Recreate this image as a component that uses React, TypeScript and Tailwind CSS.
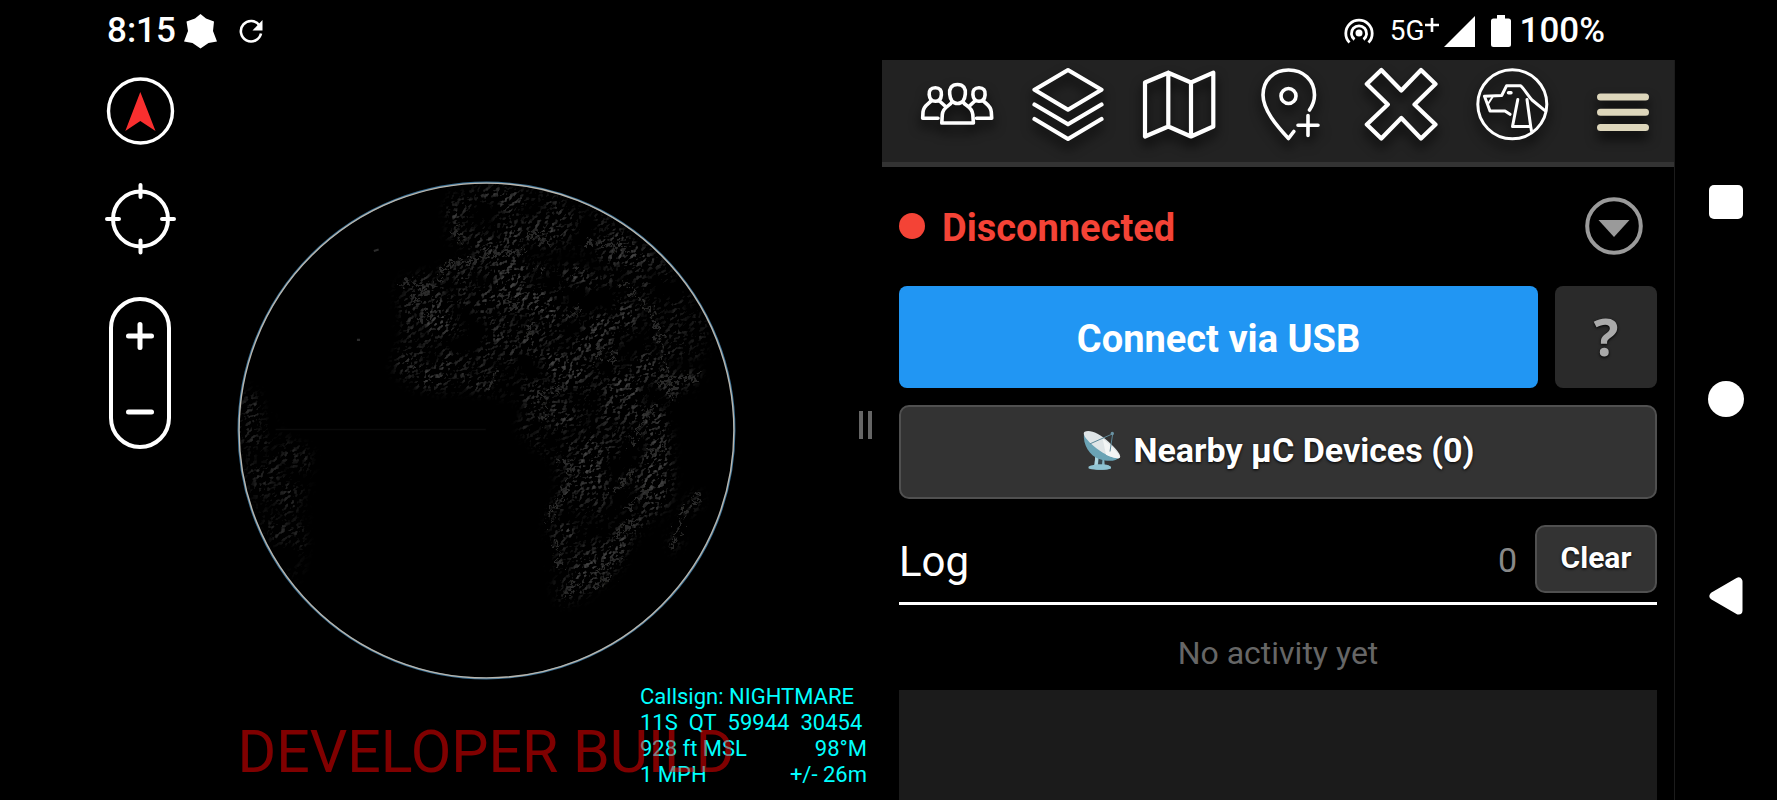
import type { ReactNode } from 'react';

interface ToolProps {
  label: string;
  children: ReactNode;
}

const Tool = ({ label, children }: ToolProps) => (
  <button type="button" aria-label={label} className="h-[72px] w-[72px] shrink-0">
    <svg
      viewBox="0 0 72 72"
      className="h-[72px] w-[72px] overflow-visible drop-shadow-[0_7px_6px_rgba(0,0,0,0.9)]"
      fill="none"
      stroke="#fff"
      strokeWidth="4.200"
      strokeLinejoin="round"
      strokeLinecap="round"
    >
      {children}
    </svg>
  </button>
);

const StatusBar = () => (
  <header className="flex h-[60px] shrink-0 items-center justify-between pt-[2px] pr-[172px] pl-[107px] text-[35px] leading-[40px] font-medium">
    <div className="flex items-center">
      <span>8:15</span>
      <svg viewBox="0 0 33 36" className="ml-2 h-9 w-[33px]" fill="#fff">
        <path d="M16.5 1 22 5.5 30 8.500 29 18l4 10.500-8.500 1.500-8 5.500-8-5.500L0 28.500 4 18 2.500 8.500 11 5.500Z" />
      </svg>
      <svg viewBox="0 0 24 24" className="ml-[22px] h-6 w-6" fill="none" stroke="#fff" strokeWidth="2.6">
        <path d="M20.500 6.500A10.200 10.200 0 1 0 22 14.500" />
        <path d="M23.500 1v10.500H13.500Z" fill="#fff" stroke="none" />
      </svg>
    </div>
    <div className="flex items-center">
      <svg viewBox="0 0 30 26" className="h-[26px] w-[30px]" fill="none" stroke="#fff" strokeWidth="2.800">
        <circle cx="15" cy="15" r="3.500" fill="#fff" stroke="none" />
        <path d="M10.500 21.500A7.600 7.600 0 1 1 19.500 21.500" />
        <path d="M5.500 24.500A13.200 13.200 0 1 1 24.500 24.500" />
      </svg>
      <span className="ml-4 text-[28px] font-normal">5G</span>
      <svg viewBox="0 0 14 14" className="mb-3 h-[14px] w-[14px]" stroke="#fff" strokeWidth="2.600">
        <path d="M7 0v14M0 7h14" />
      </svg>
      <svg viewBox="0 0 31 31" className="ml-[5px] h-[31px] w-[31px]" fill="#fff">
        <path d="M31 0v31H0Z" />
      </svg>
      <svg viewBox="0 0 20 32" className="ml-4 h-8 w-5" fill="#fff">
        <path d="M6 0h8v3.500h3.500q2.500 0 2.500 2.500v23.500q0 2.500-2.500 2.500h-15Q0 32 0 29.500V6q0-2.500 2.500-2.500H6Z" />
      </svg>
      <span className="ml-[9px]">100%</span>
    </div>
  </header>
);

// Ridge lines drawn on top of the land noise
const RIDGES = [
  'M640 325 665 300 700 292M700 298 735 290 770 272 830 264 885 266',
  'M530 358H610M540 435 560 400 600 375 640 345',
  'M575 470 610 445M550 605 575 595',
  'M820 390 850 425 875 400M1005 455 1025 450 1040 425M900 470 898 510',
  'M920 315H945M1030 315H1045M1090 580 1105 540M1130 585 1145 550',
  'M780 660 795 610M920 690 945 665 990 660M935 760 945 720',
  'M1165 350 1200 380 1255 450 1280 540 1300 620 1310 700',
  'M1270 640 1305 650M1330 640 1395 620',
  'M1195 830 1215 770 1260 715M1240 850 1290 840',
  'M955 1060 965 1000 990 985 1010 935M985 870 1015 880 1010 920',
  'M1140 960 1200 900M1180 1010 1245 960M1150 1090 1200 1040',
  'M970 1100 985 1180M1000 1270 1030 1230M1100 1190 1170 1130M1080 1240 1135 1205',
  'M1310 1120 1335 1050 1385 965',
  'M680 200 700 230M1060 240 1130 240 1190 265M900 210 950 245',
];

const Globe = () => (
  <svg viewBox="45 56 1454 1454" className="h-[501px] w-[501px]" role="img" aria-label="Globe">
    <defs>
      <filter id="terrain" x="0" y="0" width="100%" height="100%">
        <feTurbulence type="fractalNoise" baseFrequency="0.060 0.080" numOctaves="5" seed="11" result="noise" />
        <feDiffuseLighting in="noise" surfaceScale="9" lightingColor="#ffffff" result="lit">
          <feDistantLight azimuth="215" elevation="10" />
        </feDiffuseLighting>
        <feColorMatrix
          in="lit"
          type="matrix"
          values="0.110 0 0 0 -0.028  0.110 0 0 0 -0.028  0.110 0 0 0 -0.028  0 0 0 0 1"
          result="relief"
        />
        <feTurbulence type="fractalNoise" baseFrequency="0.009" numOctaves="4" seed="7" />
        <feColorMatrix type="matrix" values="0 0 0 0 0  0 0 0 0 0  0 0 0 0 0  2.800 0 0 0 -0.850" result="patches" />
        <feComposite in="relief" in2="patches" operator="in" />
      </filter>
      <filter id="soft">
        <feGaussianBlur stdDeviation="16" />
      </filter>
      <filter id="rough">
        <feTurbulence type="fractalNoise" baseFrequency="0.060" numOctaves="3" seed="4" />
        <feDisplacementMap in="SourceGraphic" scale="60" xChannelSelector="R" yChannelSelector="G" />
        <feGaussianBlur stdDeviation="2" />
      </filter>
      <mask id="land">
        <g fill="#fff" filter="url(#soft)">
          <path d="M520 350 640 320 700 285 800 258 890 262 960 300 1150 325 1200 400 1250 520 1290 620 1400 610 1320 720 1300 800 1315 900 1300 1000 1200 1090 1180 1150 1130 1215 1060 1262 990 1285 960 1200 945 1050 990 950 970 860 900 820 870 770 890 700 780 670 640 665 560 655 500 600 520 540Z" />
          <path d="M650 110 800 75 1000 115 1150 190 1290 300 1400 440 1410 560 1300 570 1200 370 1130 300 1010 240 940 265 760 262 670 258 665 190Z" />
          <path
            d="M60 640 110 680 170 790 265 850 245 1000 245 1110 225 1220 150 1100 90 950 60 800Z"
            fillOpacity="0.700"
          />
          <path d="M1395 950 1385 1000 1335 1110 1298 1135 1320 1050 1360 990Z" />
        </g>
      </mask>
      <clipPath id="disc">
        <circle cx="772" cy="783" r="718" />
      </clipPath>
    </defs>
    <g clipPath="url(#disc)">
      <g mask="url(#land)">
        <rect x="45" y="56" width="1454" height="1454" filter="url(#terrain)" />
      </g>
      <g stroke="#2a2a29" strokeWidth="10" fill="none" filter="url(#rough)" strokeDasharray="22 9">
        {RIDGES.map(d => (
          <path key={d} d={d} />
        ))}
      </g>
      <path d="M160 780H770" stroke="#0b0b0b" strokeWidth="4" />
      <path d="M396 520h9M445 262l14-4" stroke="#2c2c2c" strokeWidth="6" />
    </g>
    <circle cx="772" cy="783" r="720" fill="none" stroke="#3b7196" strokeWidth="5" />
    <circle cx="772" cy="783" r="718" fill="none" stroke="#b9b6ae" strokeWidth="4" />
  </svg>
);

const MapPane = () => (
  <section className="relative flex flex-1 items-center justify-center overflow-hidden">
    <Globe />

    <div className="absolute top-[15px] left-[15px] flex flex-col gap-9">
      <button type="button" aria-label="North up" className="h-[72px] w-[72px]">
        <svg viewBox="0 0 72 72" className="h-[72px] w-[72px]">
          <circle cx="35.500" cy="36" r="32" fill="none" stroke="#fff" strokeWidth="3.400" />
          <path d="M35.300 17 50.500 56 35.300 46 20.300 56Z" fill="#f92f2f" />
        </svg>
      </button>
      <button type="button" aria-label="Center on self" className="h-[72px] w-[72px]">
        <svg viewBox="0 0 72 72" className="h-[72px] w-[72px]" fill="none" stroke="#fff" strokeWidth="4" strokeLinecap="round">
          <circle cx="35.500" cy="36" r="27.500" />
          <path d="M35.500 2v12M35.500 57.500v12M2 36h12M57 36h12" />
        </svg>
      </button>
      <div className="flex h-[164px] w-[70px] items-center justify-center">
        <div className="flex h-[152px] w-[62px] flex-col justify-between rounded-full border-4 border-white">
          <button type="button" aria-label="Zoom in" className="flex h-[70px] items-center justify-center">
            <svg viewBox="0 0 28 28" className="h-7 w-7" stroke="#fff" strokeWidth="5" strokeLinecap="round">
              <path d="M14 2.500v23M2.500 14h23" />
            </svg>
          </button>
          <button type="button" aria-label="Zoom out" className="flex h-[66px] items-center justify-center">
            <svg viewBox="0 0 28 28" className="h-7 w-7" stroke="#fff" strokeWidth="5" strokeLinecap="round">
              <path d="M2.500 14h23" />
            </svg>
          </button>
        </div>
      </div>
    </div>

    <div className="absolute right-[15px] bottom-3 w-[227px] text-[22px] leading-[26px] whitespace-nowrap text-[#00ffff]">
      <p>Callsign: NIGHTMARE</p>
      <p className="flex gap-[11px]">
        <span>11S</span>
        <span>QT</span>
        <span>59944</span>
        <span>30454</span>
      </p>
      <p className="flex justify-between">
        <span>928 ft MSL</span>
        <span>98°M</span>
      </p>
      <p className="flex justify-between">
        <span>1 MPH</span>
        <span>+/- 26m</span>
      </p>
    </div>

    <p className="absolute inset-x-0 bottom-[18px] text-center text-[59px] leading-[60px] whitespace-nowrap text-[#ff0000]/50">
      DEVELOPER BUILD
    </p>

    <div className="absolute top-[351px] right-[10px] flex gap-[5px]">
      <span className="h-7 w-1 bg-[#666]" />
      <span className="h-7 w-1 bg-[#666]" />
    </div>
  </section>
);

const Toolbar = () => (
  <div className="flex h-[107px] shrink-0 items-start justify-between border-b-[5px] border-[#333] bg-[#222] pt-2 pr-[15px] pl-[39px]">
    <Tool label="Contacts">
      <g strokeWidth="3.600">
        <path d="M36.500 16.500c6 0 8.300 4 7.800 9.500-.4 5.500-3.300 9.500-7.800 9.500s-7.400-4-7.800-9.500c-.5-5.500 1.800-9.500 7.800-9.500Z" />
        <path d="M30.500 34.500c-1.500 3.500-8.500 4-9.200 12L20.800 55h31.600l-.6-8.500c-.8-8-7.300-8.500-9.300-12" />
        <path d="M14.300 19.700c4.600 0 6.500 3 6.100 7-.3 3.800-2.400 6.600-6.100 6.600s-5.800-2.800-6.100-6.600c-.4-4 1.500-7 6.100-7ZM58 19.700c4.600 0 6.500 3 6.100 7-.3 3.800-2.400 6.600-6.100 6.600s-5.800-2.800-6.100-6.600c-.4-4 1.500-7 6.100-7Z" />
        <path d="M17 50.200H1.700L2 44c.5-6.500 5-7.500 8.500-11.500M18.500 33l5.500 5M55.500 50.200h15.200L70.300 44c-.5-6.500-4.800-7.500-8.300-11.500M53.800 33 48.500 38" />
      </g>
    </Tool>
    <Tool label="Overlays">
      <path d="M36 2 69.500 21.700 36 41.700 2.500 21.700ZM2.500 36.500 36 56.300 69.500 36.500M2.500 51 36 71 69.500 51" />
    </Tool>
    <Tool label="Maps">
      <path d="M2 14.500 25.300 4.700 48 14.500 70.300 4.700V58.500L48 68.500 25.300 58.500 2 68.500ZM25.300 4.700V58.500M48 14.500V68.500" />
    </Tool>
    <Tool label="Add point">
      <g strokeWidth="3.600">
        <circle cx="34.500" cy="28" r="7.500" />
        <path d="M55.500 42c3.400-5 5-9.500 5-15C60.500 12 49 2 34.500 2S9 12 9 27c0 15 14 31 25.500 43.500l5.300-7" />
        <path d="M54 47.500v20M44 57.300h20" />
      </g>
    </Tool>
    <Tool label="Tools">
      <path d="M16.300 2 36.300 22.500 56 2 70.500 16 49.500 36.500 70.500 56.500 56 70.500 36.300 50 16.300 70.500 1.800 56.500 22.800 36.500 1.800 16Z" />
    </Tool>
    <Tool label="Watchdog">
      <g strokeWidth="3">
        <circle cx="36.300" cy="36.300" r="34.500" />
        <path d="M8.500 28.200 25.700 27.500 30.500 17.800H44.700C49 22 52 28 56 32L69 42.700M8.500 28.200 14 43H29L34 46.300" />
        <path d="M16.500 29 12.300 35.500" strokeWidth="2" />
        <path d="M32.500 24.700h2.500" strokeWidth="3.400" />
        <path d="M41.800 31.500 36.500 58.500H54.700L51 31.500M54.700 58.500 55.500 63" />
      </g>
    </Tool>
    <Tool label="Menu">
      <path d="M13.500 29H58.500M13.500 44.300H58.500M13.500 59.600H58.500" stroke="#ddd6bb" strokeWidth="7" />
    </Tool>
  </div>
);

const SatelliteDish = () => (
  <svg viewBox="660 748 120 125" className="h-[42px] w-10">
    <path d="M690 865c0-6 5-9 8-11l2-26h26l2 26c9 1 17 3 19 11-12 6-45 6-57 0Z" fill="#82b4c4" />
    <path d="M700 828h12l-6 30h-9Z" fill="#a9d3de" />
    <path d="M710 832h12l-2 22h-12Z" fill="#37474f" />
    <path d="M680 860c16-8 52-8 66 0 2 4 1 6-2 7-16 4-44 4-62 0-3-1-3-4-2-7Z" fill="#8fc3d2" />
    <path d="M666 760c-4 34 16 68 48 78 24 8 50 6 58-6Z" fill="#6aa3b5" />
    <path d="M668 756c14-8 44 4 70 28 26 23 42 44 35 50-8 6-40-6-68-27-28-22-47-44-37-51Z" fill="#dfe5e7" />
    <path d="m722 776 16 14c22 19 38 38 35 44-5 4-22 0-41-9Z" fill="#f3f5f5" />
    <path d="M684 792 752 762 744 815" fill="none" stroke="#5c8798" strokeWidth="3" />
    <circle cx="751" cy="761" r="5" fill="#6a93a3" />
  </svg>
);

const PluginPane = () => (
  <section className="flex flex-1 flex-col">
    <Toolbar />
    <div className="flex flex-1 flex-col px-[17px] pt-[30px]">
      <div className="flex h-[58px] items-center pr-[14px]">
        <span className="h-[26px] w-[26px] rounded-full bg-[#f44336]" />
        <span className="ml-[17px] flex-1 pt-[3px] text-[38px] leading-[44px] font-bold text-[#f44336]">Disconnected</span>
        <button type="button" aria-label="Expand connection" className="h-[58px] w-[58px]">
          <svg viewBox="0 0 58 58" className="h-[58px] w-[58px]">
            <circle cx="29" cy="29" r="26.800" fill="none" stroke="#9a9a9a" strokeWidth="4" />
            <path d="M13.500 23H44.500L29 40Z" fill="#9a9a9a" />
          </svg>
        </button>
      </div>

      <div className="mt-[31px] flex gap-[17px]">
        <button
          type="button"
          className="h-[102px] flex-1 rounded-lg bg-[#2196f3] pt-1 text-[38px] leading-[44px] font-bold"
        >
          Connect via USB
        </button>
        <button
          type="button"
          aria-label="Help"
          className="h-[102px] w-[102px] rounded-lg bg-[#2a2a2a] pb-[2px] font-['Noto_Sans',sans-serif] text-[52px] leading-[60px] font-bold text-[#aaa] text-shadow-[0_1px_3px_#000]"
        >
          ?
        </button>
      </div>

      <button
        type="button"
        className="mt-[17px] flex h-[94px] items-center justify-center gap-3 rounded-[10px] border-2 border-[#505050] bg-[#333] pb-1 text-[34px] leading-[42px] font-bold text-shadow-[0_1px_3px_#000]"
      >
        <SatelliteDish />
        Nearby µC Devices (0)
      </button>

      <div className="mt-[26px] flex items-center border-b-[3px] border-white pb-[9px]">
        <h2 className="flex-1 pt-[6px] text-[42px] leading-[50px]">Log</h2>
        <span className="pt-[2px] text-[34px] leading-[40px] text-[#888]">0</span>
        <button
          type="button"
          className="ml-[18px] h-[68px] w-[122px] rounded-[10px] border-2 border-[#505050] bg-[#333] pb-[2px] text-[30px] leading-[36px] font-bold text-shadow-[0_1px_3px_#000]"
        >
          Clear
        </button>
      </div>

      <p className="pt-[29px] pb-[18px] text-center text-[32px] leading-[38px] text-[#666]">No activity yet</p>
      <div className="flex-1 bg-[#1b1b1b]" />
    </div>
  </section>
);

const NavBar = () => (
  <nav className="flex w-[103px] shrink-0 flex-col items-center justify-center gap-[149px] border-l border-[#1c1c1c] pb-[62px]">
    <button type="button" aria-label="Recents" className="flex h-12 w-12 items-center justify-center">
      <span className="h-[34px] w-[34px] rounded-[5px] bg-white" />
    </button>
    <button type="button" aria-label="Home" className="flex h-12 w-12 items-center justify-center">
      <span className="h-9 w-9 rounded-full bg-white" />
    </button>
    <button type="button" aria-label="Back" className="flex h-12 w-12 items-center justify-center">
      <svg viewBox="0 0 34 38" className="h-[38px] w-[34px]" fill="#fff" stroke="#fff" strokeWidth="8" strokeLinejoin="round">
        <path d="M4.500 19 29.500 4.500V33.500Z" />
      </svg>
    </button>
  </nav>
);

export default function App() {
  return (
    <div className="flex min-h-screen flex-col bg-black font-[Roboto,sans-serif] text-white">
      <StatusBar />
      <main className="flex flex-1 pl-[90px]">
        <MapPane />
        <PluginPane />
        <NavBar />
      </main>
    </div>
  );
}
